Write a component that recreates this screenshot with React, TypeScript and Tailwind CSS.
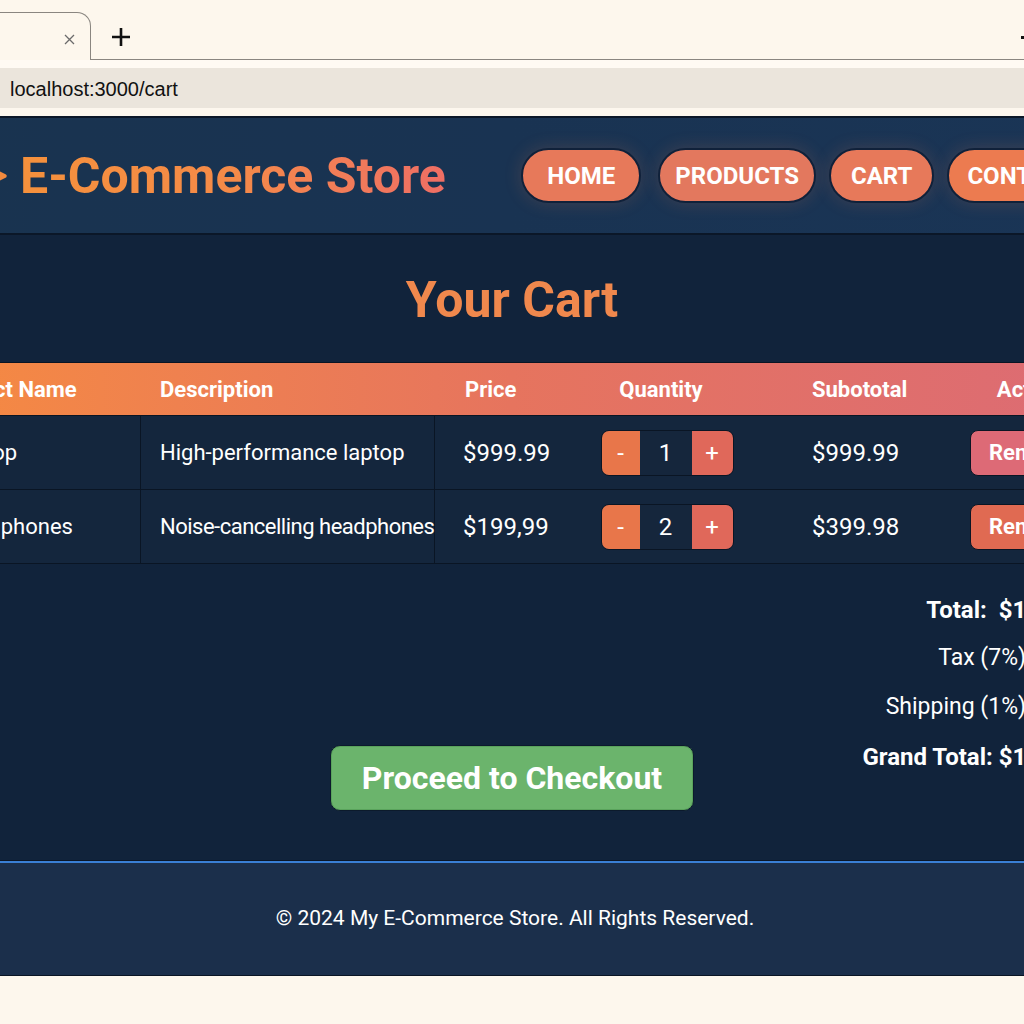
import React from "react";

const rows = [
  { name: "Laptop", desc: "High-performance laptop", dtrack: "", price: "$999.99", qty: 1, sub: "$999.99", rm: "bg-[#dd6a76]" },
  { name: "Headphones", desc: "Noise-cancelling headphones", dtrack: "tracking-[-0.5px]", price: "$199,99", qty: 2, sub: "$399.98", rm: "bg-[#e06a52]" },
];

const grid = "grid grid-cols-[225px_294px_145px_170px_200px_158px]";

const navs = [
  { n: "HOME", c: "bg-[#e7795a] px-[24px]", m: "" },
  { n: "PRODUCTS", c: "bg-[#e3785e] px-[15px]", m: "ml-[17px]" },
  { n: "CART", c: "bg-[#e7795a] px-[20px]", m: "ml-[13px]" },
  { n: "CONTACT", c: "bg-[#ec7b50] px-[18px]", m: "ml-[13px]" },
];

export default function App() {
  return (
    <div className="w-[1024px] h-[1024px] overflow-hidden bg-[#fdf7ed] font-['Roboto',sans-serif]">
      {/* browser chrome */}
      <div className="h-[60px] flex items-end">
        <div className="w-[91px] h-[48px] border-t border-r border-[#8a8680] rounded-tr-[14px] flex justify-end pr-[15px] pt-[21px] shrink-0">
          <svg width="11" height="11" viewBox="0 0 11 11">
            <path d="M1 1L10 10M10 1L1 10" stroke="#6b6b6b" strokeWidth="1.3" />
          </svg>
        </div>
        <div className="flex-1 h-[60px] border-b border-[#8a8680] flex justify-between pt-[27px] pl-[20px]">
          <svg width="20" height="20" viewBox="0 0 20 20">
            <path d="M10 1V19M1 10H19" stroke="#111" strokeWidth="2.6" />
          </svg>
          <div className="w-[3px] h-[3px] bg-[#111] mt-[9px]" />
        </div>
      </div>
      <div className="h-[8px] bg-[#fffaf3]" />
      <div className="h-[40px] bg-[#ebe5dc] flex items-center pl-[10px] pt-[2px] text-[20px] text-[#111] font-['Liberation_Sans',sans-serif]">
        localhost:3000/cart
      </div>
      <div className="h-[8px] bg-[#fdf7ee]" />

      {/* page */}
      <div className="w-[1280px] ml-[-128px]">
        <header className="h-[119px] border-t-2 border-b-2 border-[#0b1728] bg-gradient-to-r from-[#19334f] via-[#193352] to-[#1a3556] flex items-center justify-between pl-[96px] pr-[56px]">
          <div className="flex items-center gap-[12px]">
            <svg width="40" height="40" viewBox="0 0 24 24" fill="none" stroke="#f28a3e" strokeWidth="2.4" strokeLinecap="round" strokeLinejoin="round">
              <path d="M12 7l10 5-10 5" />
            </svg>
            <h1 className="text-[50px] leading-none font-bold bg-gradient-to-r from-[#f5913c] via-[#f48a48] to-[#ef6e64] bg-clip-text text-transparent">
              E-Commerce Store
            </h1>
          </div>
          <nav className="flex items-center">
            {navs.map((v) => (
              <div
                key={v.n}
                className={`h-[55px] rounded-full border-2 border-[#10213a] flex items-center text-white font-bold text-[24px] shadow-[0_0_18px_rgba(240,130,80,0.18)] ${v.c} ${v.m}`}
              >
                {v.n}
              </div>
            ))}
          </nav>
        </header>

        <main className="bg-[#11233b] pt-[40px] pb-[49px] px-[44px] border-b-[1px] border-[#0b1626]">
          <h2 className="text-center text-[50px] leading-none font-bold text-[#f0884d] mb-[37px]">Your Cart</h2>

          <div className="text-white">
            <div className={`${grid} h-[54px] items-center bg-gradient-to-r from-[#f68b3f] via-[#e6745e] to-[#dc6b74] text-[22px] font-bold border-y border-[#0a1524]`}>
              <div className="pl-[19px]">Product Name</div>
              <div className="pl-[19px]">Description</div>
              <div className="pl-[30px]">Price</div>
              <div className="text-center pr-[8px]">Quantity</div>
              <div className="pl-[62px]">Subototal</div>
              <div className="text-center">Action</div>
            </div>
            {rows.map((r) => (
              <div key={r.name} className={`${grid} h-[74px] bg-[#14263d] border-b border-[#0a1524] text-[22px]`}>
                <div className="pl-[33px] flex items-center border-r border-[#0a1524]">{r.name}</div>
                <div className={`pl-[19px] flex items-center border-r border-[#0a1524] whitespace-nowrap ${r.dtrack}`}>{r.desc}</div>
                <div className="pl-[28px] flex items-center text-[24px]">{r.price}</div>
                <div className="flex items-center justify-center pl-[4px]">
                  <div className="flex h-[46px] rounded-[8px] border border-[#0a1524] overflow-hidden text-[24px]">
                    <div className="w-[38px] bg-[#e8764a] flex items-center justify-center">-</div>
                    <div className="w-[52px] bg-[#15263c] flex items-center justify-center">{r.qty}</div>
                    <div className="w-[41px] bg-[#e0685a] flex items-center justify-center">+</div>
                  </div>
                </div>
                <div className="pl-[62px] flex items-center text-[24px]">{r.sub}</div>
                <div className="flex items-center justify-center">
                  <div className={`h-[46px] px-[18px] rounded-[8px] border border-[#0a1524] ${r.rm} flex items-center font-bold`}>
                    Remove
                  </div>
                </div>
              </div>
            ))}
          </div>

          <div className="flex items-start text-white mt-[21px]">
            <div className="flex-1" />
            <div className="mt-[160px] w-[364px] h-[66px] rounded-[10px] bg-[#6bb46c] border border-[#0c1a2c] ring-1 ring-inset ring-[#5aa35c] flex items-center justify-center text-[32px] font-bold">
              Proceed to Checkout
            </div>
            <div className="flex-1 flex flex-col items-end text-[23px]">
              <div className="h-[49px] flex items-center font-bold text-[24px]">Total:&nbsp;&nbsp;$1,399.97</div>
              <div className="h-[49px] flex items-center">Tax (7%): $98.00</div>
              <div className="h-[49px] flex items-center">Shipping (1%): $14.00</div>
              <div className="h-[49px] flex items-center font-bold text-[24px]">Grand Total: $1,511.97</div>
            </div>
          </div>
        </main>

        <footer className="h-[115px] border-t-2 border-[#3a7fd4] border-b border-b-[#0a1524] bg-[#1b2f4b] flex items-center justify-center pl-[6px] text-white text-[21px]">
          © 2024 My E-Commerce Store. All Rights Reserved.
        </footer>
      </div>
    </div>
  );
}
